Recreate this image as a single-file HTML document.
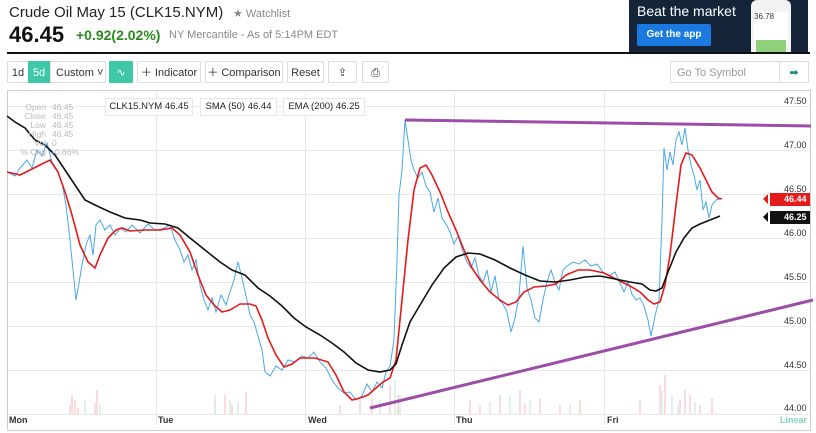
<!DOCTYPE html>
<html><head><meta charset="utf-8"><style>
body{margin:0;width:816px;height:433px;background:#fff;font-family:"Liberation Sans",sans-serif;position:relative;overflow:hidden}
.a{position:absolute;white-space:nowrap}
.btn{position:absolute;top:61px;height:22px;border:1px solid #ddd;background:#fff;font-size:11px;color:#333;line-height:22px;text-align:center;box-sizing:border-box;white-space:nowrap;overflow:hidden}
.lg{position:absolute;top:98px;height:18px;font-size:9.5px;color:#222;line-height:15px;text-align:center;box-sizing:border-box;background:#fff;border:1px solid #e6e6e6}
.yl{position:absolute;left:784px;font-size:9px;color:#333}
.ohlc{position:absolute;font-size:8.5px;color:#bbb;line-height:9px;text-align:right}
</style></head><body>
<div class="a" style="left:9px;top:4px;font-size:15px;color:#222">Crude Oil May 15 (CLK15.NYM)</div>
<div class="a" style="left:233px;top:7px;font-size:11px;color:#888">★ Watchlist</div>
<div class="a" style="left:9px;top:22px;font-size:22px;font-weight:bold;color:#111">46.45</div>
<div class="a" style="left:76px;top:27px;font-size:14px;font-weight:bold;color:#2a8a1e">+0.92(2.02%)</div>
<div class="a" style="left:169px;top:29px;font-size:11px;color:#888">NY Mercantile - As of 5:14PM EDT</div>
<div class="a" style="left:629px;top:0;width:179px;height:52px;background:#14253a"></div>
<div class="a" style="left:637px;top:3px;font-size:14px;color:#fff">Beat the market</div>
<div class="a" style="left:637px;top:24px;width:74px;height:22px;background:#1a7ae0;border-radius:2px;color:#fff;font-size:10px;font-weight:bold;text-align:center;line-height:22px">Get the app</div>
<div class="a" style="left:751px;top:0;width:40px;height:52px;background:#f2f2f2;border-radius:6px 6px 0 0"></div>
<div class="a" style="left:754px;top:12px;width:34px;height:40px;background:#fff;font-size:8px;color:#333">36.78</div>
<div class="a" style="left:756px;top:40px;width:30px;height:12px;background:#8fd07a"></div>
<div class="a" style="left:7px;top:52px;width:803px;height:2px;background:#111"></div>
<div class="btn" style="left:7px;width:22px">1d</div>
<div class="btn" style="left:28px;width:22px;background:#3ec8a8;color:#fff;border-color:#3ec8a8">5d</div>
<div class="btn" style="left:50px;width:56px;text-align:left;padding-left:5px">Custom ˅</div>
<div class="btn" style="left:109px;width:24px;background:#3ec8a8;border-color:#3ec8a8;color:#fff">∿</div>
<div class="btn" style="left:137px;width:64px">＋ Indicator</div>
<div class="btn" style="left:205px;width:78px">＋ Comparison</div>
<div class="btn" style="left:287px;width:37px">Reset</div>
<div class="btn" style="left:328px;width:29px">⇪</div>
<div class="btn" style="left:362px;width:27px">⎙</div>
<div class="btn" style="left:670px;width:110px;text-align:left;padding-left:6px;color:#999">Go To Symbol</div>
<div class="btn" style="left:779px;width:30px;color:#178a78">➡</div>
<svg class="a" style="left:0;top:0" width="816" height="433">
<rect x="7.5" y="90.5" width="803" height="340" fill="none" stroke="#ccc"/>
<g stroke="#e8e8e8" stroke-width="1">
<line x1="8" y1="106.5" x2="810" y2="106.5"/><line x1="8" y1="150.5" x2="810" y2="150.5"/><line x1="8" y1="194.5" x2="810" y2="194.5"/><line x1="8" y1="238.5" x2="810" y2="238.5"/><line x1="8" y1="282.5" x2="810" y2="282.5"/><line x1="8" y1="326.5" x2="810" y2="326.5"/><line x1="8" y1="370.5" x2="810" y2="370.5"/><line x1="8" y1="414.5" x2="810" y2="414.5"/>
<line x1="156.5" y1="91" x2="156.5" y2="425"/><line x1="305.5" y1="91" x2="305.5" y2="425"/><line x1="454.5" y1="91" x2="454.5" y2="425"/><line x1="604.5" y1="91" x2="604.5" y2="425"/>
</g>
<g stroke-width="1.5" opacity="0.5">
<path d="M70 414V405M72 414V395M75 414V400M78 414V408M95 414V403M97 414V390M215 414V400M225 414V395M232 414V405M246 414V392M340 414V405M360 414V400M372 414V398M390 414V385M398 414V395M470 414V400M480 414V405M500 414V395M520 414V390M525 414V403M540 414V398M560 414V405M580 414V400M640 414V400M660 414V385M665 414V375M680 414V400M685 414V390M690 414V395M700 414V405M712 414V398" stroke="#f2a0a8"/>
<path d="M85 414V400M100 414V405M215 414V395M230 414V400M238 414V402M380 414V400M395 414V380M400 414V395M490 414V402M510 414V395M530 414V400M570 414V405M662 414V390M672 414V395M678 414V405M695 414V402" stroke="#a8dcc0"/>
</g>
<polyline fill="none" stroke="#4aa8e8" stroke-width="1" points="7,172 15,176 20,168 27,160 32,168 37,150 42,156 47,143 52,162 57,170 62,183 66,205 70,240 73,270 76,300 79,283 82,265 86,245 90,235 93,255 96,225 100,220 105,230 110,225 115,235 120,228 126,232 132,225 140,233 148,224 155,230 162,229 170,225 175,240 180,250 184,262 188,255 192,270 196,260 200,285 204,300 208,310 212,298 216,312 221,295 226,305 230,292 234,280 238,262 242,278 246,296 250,315 254,322 258,336 262,350 265,372 270,376 276,366 282,370 288,360 295,362 302,356 308,358 314,352 320,362 326,368 332,380 338,388 344,393 350,392 356,400 362,396 367,384 372,392 377,382 382,388 386,372 390,366 394,340 397,260 399,195 402,170 405,120 408,140 411,160 414,170 418,178 422,172 426,186 430,192 434,212 438,198 442,218 446,224 450,232 454,244 458,236 463,252 467,262 471,268 475,258 479,276 483,282 487,270 491,292 495,276 499,300 503,304 507,312 511,332 515,318 519,296 523,246 527,288 531,300 535,318 539,322 543,300 547,282 551,270 555,282 559,290 563,270 567,266 573,262 579,264 585,260 591,266 597,264 603,272 609,276 615,272 620,283 624,292 628,282 632,294 636,300 640,298 644,306 648,320 651,336 655,316 659,300 662,220 664,148 667,170 670,152 673,165 676,140 679,132 682,145 685,128 688,150 691,165 694,175 697,190 700,180 703,210 706,202 709,218 712,205 716,200 720,199"/>
<polyline fill="none" stroke="#e51a1a" stroke-width="1.6" points="7,172 20,175 30,170 40,165 50,160 58,172 66,195 72,215 80,245 88,262 95,268 100,255 108,238 116,230 122,228 130,231 145,230 160,230 172,228 180,235 190,252 198,275 206,295 214,305 222,312 230,310 240,304 250,304 256,306 262,320 268,338 276,355 284,367 292,364 300,358 315,358 328,362 336,375 344,392 352,400 360,398 368,395 376,388 383,382 390,378 396,360 402,300 408,240 414,190 420,168 426,165 432,175 440,192 448,212 456,230 464,250 472,268 480,280 490,292 500,300 508,305 516,302 524,292 534,287 546,286 556,284 566,275 578,270 590,270 604,273 618,280 630,286 640,292 648,300 654,304 660,302 665,285 670,255 676,205 681,165 686,153 692,155 700,168 706,180 712,192 718,198 722,199"/>
<polyline fill="none" stroke="#111" stroke-width="1.6" points="7,116 15,122 25,128 35,140 45,145 55,155 65,170 75,185 85,200 95,205 110,212 125,218 140,220 150,223 165,224 178,228 190,238 205,250 220,262 232,270 245,275 258,288 270,296 282,306 294,318 306,327 320,335 332,343 344,352 356,363 368,370 380,372 390,370 396,364 402,345 410,322 420,305 432,285 444,268 456,257 468,253 480,254 495,260 510,268 525,275 540,281 555,282 570,280 585,277 600,276 615,279 630,282 642,284 650,290 656,291 662,288 668,272 676,252 684,238 692,228 700,224 710,220 720,216"/>
<line x1="405" y1="120" x2="811" y2="126" stroke="#9b4ea6" stroke-width="3"/>
<line x1="370" y1="408" x2="813" y2="300" stroke="#9b4ea6" stroke-width="3"/>
<line x1="110" y1="115" x2="193" y2="115" stroke="#2a9ad8" stroke-width="1.5"/>
<line x1="200" y1="115" x2="277" y2="115" stroke="#e51a1a" stroke-width="1.5"/>
<line x1="283" y1="115" x2="365" y2="115" stroke="#111" stroke-width="1.5"/>
<polygon points="763,199 768,194 768,204" fill="#e51a1a"/>
<rect x="770" y="193" width="40" height="13" fill="#e51a1a"/>
<polygon points="763,217 768,212 768,222" fill="#111"/>
<rect x="770" y="211" width="40" height="13" fill="#111"/>
</svg>
<div class="lg" style="left:105px;width:88px">CLK15.NYM 46.45</div>
<div class="lg" style="left:200px;width:77px">SMA (50) 46.44</div>
<div class="lg" style="left:283px;width:82px">EMA (200) 46.25</div>
<div class="ohlc" style="left:18px;top:103px;width:28px">Open<br>Close<br>Low<br>High<br>Vol<br>% Chg</div>
<div class="ohlc" style="left:52px;top:103px;text-align:left">46.45<br>46.45<br>46.45<br>46.45<br>0<br>-0.66%</div>
<div class="yl" style="top:96px">47.50</div><div class="yl" style="top:140px">47.00</div><div class="yl" style="top:184px">46.50</div><div class="yl" style="top:228px">46.00</div><div class="yl" style="top:272px">45.50</div><div class="yl" style="top:316px">45.00</div><div class="yl" style="top:360px">44.50</div><div class="yl" style="top:403px">44.00</div>
<div class="a" style="left:784px;top:194px;font-size:9px;font-weight:bold;color:#fff">46.44</div>
<div class="a" style="left:784px;top:212px;font-size:9px;font-weight:bold;color:#fff">46.25</div>
<div class="a" style="left:9px;top:415px;font-size:9px;font-weight:bold;color:#333">Mon</div>
<div class="a" style="left:158px;top:415px;font-size:9px;font-weight:bold;color:#333">Tue</div>
<div class="a" style="left:308px;top:415px;font-size:9px;font-weight:bold;color:#333">Wed</div>
<div class="a" style="left:456px;top:415px;font-size:9px;font-weight:bold;color:#333">Thu</div>
<div class="a" style="left:607px;top:415px;font-size:9px;font-weight:bold;color:#333">Fri</div>
<div class="a" style="left:780px;top:415px;font-size:9px;font-weight:bold;color:#7ed6c4">Linear</div>
</body></html>
